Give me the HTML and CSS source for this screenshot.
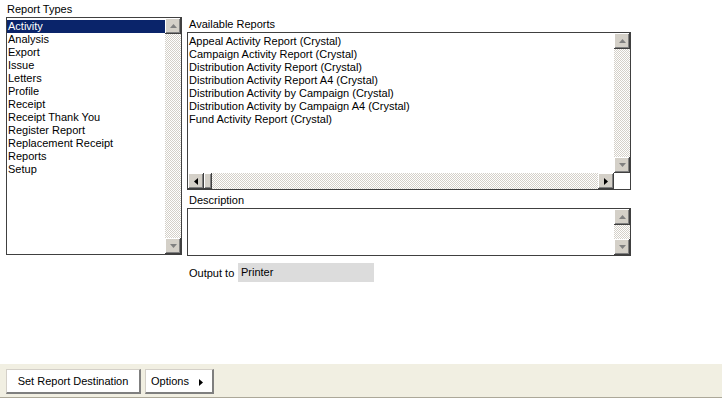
FILE: index.html
```html
<!DOCTYPE html>
<html lang="en">
<head>
    <meta charset="UTF-8">
    <title>Reports</title>
    <link rel="stylesheet" href="styles.css">
</head>
<body>
    <div class="main">
        <div class="col-left">
            <div class="label">Report Types</div>
            <div class="box types">
                <ul class="items">
                    <li class="selected">Activity</li>
                    <li>Analysis</li>
                    <li>Export</li>
                    <li>Issue</li>
                    <li>Letters</li>
                    <li>Profile</li>
                    <li>Receipt</li>
                    <li>Receipt Thank You</li>
                    <li>Register Report</li>
                    <li>Replacement Receipt</li>
                    <li>Reports</li>
                    <li>Setup</li>
                </ul>
                <div class="vscroll">
                    <span class="sbtn"><svg width="7" height="4" viewBox="0 0 7 4"><path d="M3.5 0 L7 4 L0 4 Z" fill="#808080"/></svg></span>
                    <span class="track"></span>
                    <span class="sbtn"><svg width="7" height="4" viewBox="0 0 7 4"><path d="M0 0 L7 0 L3.5 4 Z" fill="#808080"/></svg></span>
                </div>
            </div>
        </div>

        <div class="col-right">
            <div class="label">Available Reports</div>
            <div class="box reports">
                <div class="reports-top">
                    <ul class="items">
                        <li>Appeal Activity Report (Crystal)</li>
                        <li>Campaign Activity Report (Crystal)</li>
                        <li>Distribution Activity Report (Crystal)</li>
                        <li>Distribution Activity Report A4 (Crystal)</li>
                        <li>Distribution Activity by Campaign (Crystal)</li>
                        <li>Distribution Activity by Campaign A4 (Crystal)</li>
                        <li>Fund Activity Report (Crystal)</li>
                    </ul>
                    <div class="vscroll">
                        <span class="sbtn"><svg width="7" height="4" viewBox="0 0 7 4"><path d="M3.5 0 L7 4 L0 4 Z" fill="#808080"/></svg></span>
                        <span class="track"></span>
                        <span class="sbtn"><svg width="7" height="4" viewBox="0 0 7 4"><path d="M0 0 L7 0 L3.5 4 Z" fill="#808080"/></svg></span>
                    </div>
                </div>
                <div class="hscroll">
                    <span class="sbtn"><svg width="4" height="7" viewBox="0 0 4 7"><path d="M4 0 L4 7 L0 3.5 Z" fill="#000"/></svg></span>
                    <span class="thumb"></span>
                    <span class="track"></span>
                    <span class="sbtn"><svg width="4" height="7" viewBox="0 0 4 7"><path d="M0 0 L4 3.5 L0 7 Z" fill="#000"/></svg></span>
                    <span class="corner"></span>
                </div>
            </div>

            <div class="label desc-label">Description</div>
            <div class="box desc">
                <div class="desc-text"></div>
                <div class="vscroll">
                    <span class="sbtn"><svg width="7" height="4" viewBox="0 0 7 4"><path d="M3.5 0 L7 4 L0 4 Z" fill="#808080"/></svg></span>
                    <span class="track"></span>
                    <span class="sbtn"><svg width="7" height="4" viewBox="0 0 7 4"><path d="M0 0 L7 0 L3.5 4 Z" fill="#808080"/></svg></span>
                </div>
            </div>

            <div class="output">
                <span class="output-label">Output to</span>
                <span class="field">Printer</span>
            </div>
        </div>
    </div>

    <div class="toolbar">
        <button type="button" class="btn dest">Set Report Destination</button>
        <button type="button" class="btn options">Options <svg width="4" height="7" viewBox="0 0 4 7"><path d="M0 0 L4 3.5 L0 7 Z" fill="#000"/></svg></button>
    </div>
</body>
</html>
```

FILE: styles.css
```css
body {
    margin: 0;
    background: #fff;
    font-family: "Liberation Sans", Arial, sans-serif;
    font-size: 11px;
    color: #000;
}

.main {
    display: flex;
    height: 364px;
}

.col-left {
    margin-left: 6px;
    padding-top: 3px;
    width: 176px;
}

.col-right {
    margin-left: 5px;
    padding-top: 18px;
    width: 444px;
}

.label {
    height: 14px;
    line-height: 13px;
    padding-left: 1px;
}

.col-right .label {
    padding-left: 2px;
}

.desc-label {
    margin-top: 4px;
    height: 14px;
}

.box {
    border: 1px solid #404040;
    background: #fff;
    display: flex;
}

.types {
    height: 236px;
}

.items {
    list-style: none;
    margin: 0;
    padding: 2px 0 0 0;
    flex: 1;
    overflow: hidden;
}

.items li {
    height: 13px;
    line-height: 13px;
    padding-left: 1px;
    white-space: nowrap;
}

.types .items li.selected {
    background: #0a246a;
    color: #fff;
}

.vscroll {
    width: 16px;
    display: flex;
    flex-direction: column;
}

.sbtn {
    width: 16px;
    height: 16px;
    flex: none;
    background: #d4d0c8;
    box-shadow: inset -1px -1px #404040, inset 1px 1px #fff, inset -2px -2px #808080;
    display: flex;
    align-items: center;
    justify-content: center;
}

.sbtn svg {
    display: block;
}

.track {
    flex: 1;
    background: repeating-conic-gradient(#d4d0c8 0 25%, #fff 0 50%) 0 0 / 2px 2px;
}

.reports {
    flex-direction: column;
    height: 156px;
}

.reports-top {
    display: flex;
    flex: 1;
    min-height: 0;
}

.hscroll {
    display: flex;
    height: 16px;
}

.hscroll .thumb {
    width: 8px;
    flex: none;
    background: #d4d0c8;
    box-shadow: inset -1px -1px #404040, inset 1px 1px #fff, inset -2px -2px #808080;
}

.hscroll .corner {
    width: 16px;
    background: #fff;
}

.desc {
    height: 46px;
}

.desc-text {
    flex: 1;
}

.output {
    display: flex;
    align-items: center;
    margin-top: 7px;
    height: 19px;
}

.output-label {
    padding-left: 2px;
    width: 49px;
}

.field {
    background: #dcdcdc;
    width: 133px;
    height: 19px;
    line-height: 19px;
    padding-left: 3px;
}

.toolbar {
    height: 34px;
    background: #f1efe2;
    border-bottom: 1px solid #aca899;
    box-shadow: 0 1px 0 #d4d0c8;
    display: flex;
    align-items: flex-start;
    gap: 4px;
    padding: 5px 0 0 6px;
    box-sizing: border-box;
}

.btn {
    height: 25px;
    background: #fff;
    border: 1px solid #d4d0c8;
    border-right: 2px solid #7f7f7f;
    border-bottom: 2px solid #7f7f7f;
    font-family: "Liberation Sans", Arial, sans-serif;
    font-size: 11px;
    color: #000;
    padding: 0;
    margin: 0;
}

.dest {
    width: 135px;
}

.options {
    width: 69px;
    text-align: left;
    padding-left: 5px;
    display: flex;
    align-items: center;
}

.options svg {
    margin-left: 10px;
    margin-top: 2px;
}
```
